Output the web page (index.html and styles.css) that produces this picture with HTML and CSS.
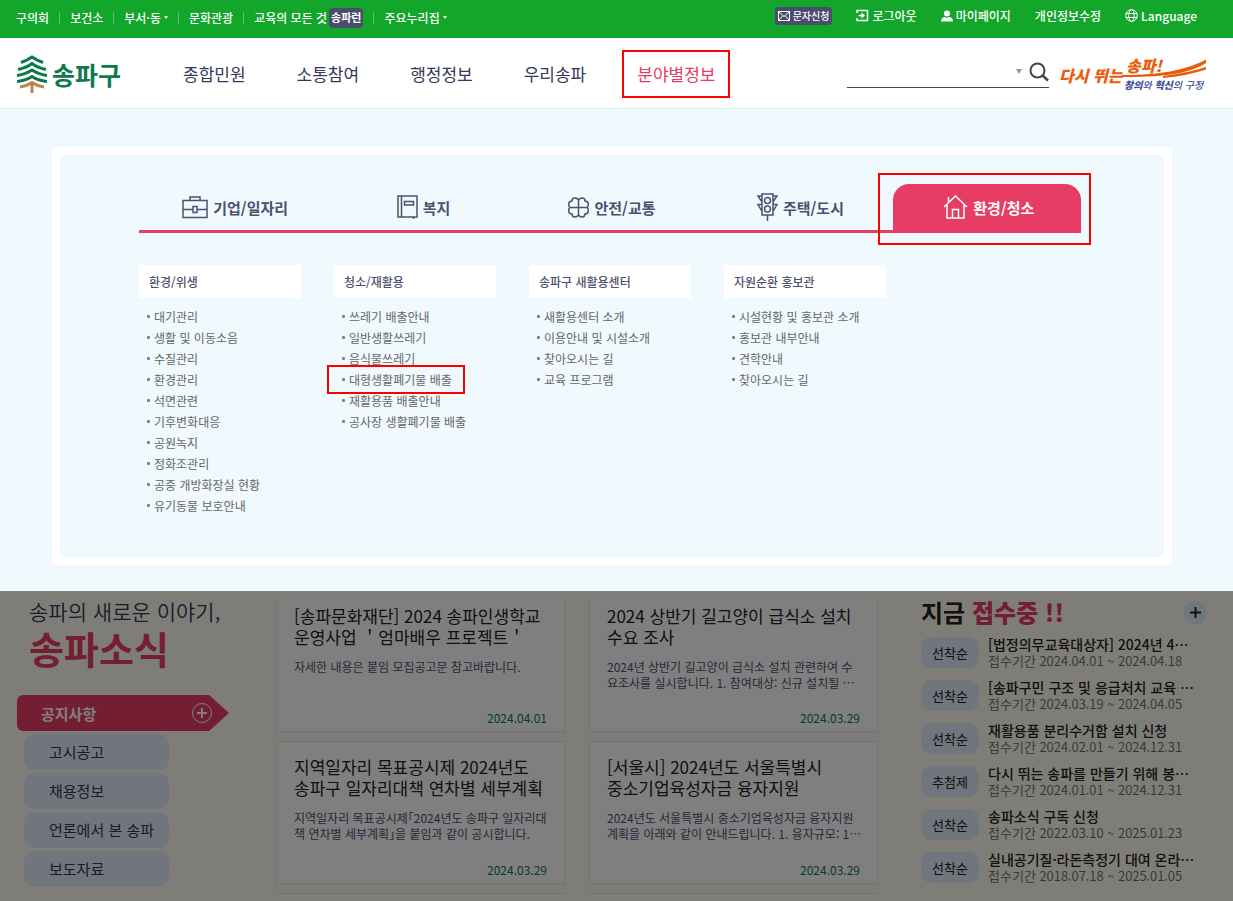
FILE: index.html
```html
<!DOCTYPE html>
<html lang="ko">
<head>
    <meta charset="UTF-8">
    <meta name="viewport" content="width=device-width, initial-scale=1.0">
    <title>송파구</title>
    <link rel="stylesheet" href="styles.css">
</head>
<body>
    <div class="topbar">
        <ul class="top-left">
            <li><a href="#">구의회</a></li>
            <li><a href="#">보건소</a></li>
            <li><a href="#">부서·동<span class="caret"></span></a></li>
            <li><a href="#">문화관광</a></li>
            <li><a href="#">교육의 모든 것 <span class="badge">송파런</span></a></li>
            <li><a href="#">주요누리집<span class="caret"></span></a></li>
        </ul>
        <ul class="top-right">
            <li>
                <a href="#" class="badge sms">
                    <svg width="12" height="10" viewBox="0 0 12 10" fill="none" stroke="#fff"><rect x=".5" y=".5" width="11" height="9"/><path d="M1 1l5 4.500l5-4.500M1 9l3.500-4M11 9L7.500 5"/></svg>
                    문자신청
                </a>
            </li>
            <li>
                <a href="#">
                    <svg width="13" height="13" viewBox="0 0 13 13" fill="none" stroke="#fff" stroke-width="1.500"><path d="M1 4V1.500h10.500v10H1V9"/><path d="M2.500 6.500h4"/><path d="M5.500 3.500L9 6.500l-3.500 3z" fill="#fff" stroke="none"/></svg>
                    로그아웃
                </a>
            </li>
            <li>
                <a href="#">
                    <svg width="12" height="12" viewBox="0 0 12 12" fill="#fff"><circle cx="6" cy="3.500" r="3"/><path d="M0 11.500c0-3 2-4.500 4-4.500l2 1 2-1c2 0 4 1.500 4 4.500z"/></svg>
                    마이페이지
                </a>
            </li>
            <li><a href="#">개인정보수정</a></li>
            <li>
                <a href="#" class="language">
                    <svg width="13" height="13" viewBox="0 0 13 13" fill="none" stroke="#fff"><circle cx="6.500" cy="6.500" r="5.800"/><ellipse cx="6.500" cy="6.500" rx="2.700" ry="5.800"/><path d="M1 4.500h11M1 8.500h11"/></svg>
                    Language
                </a>
            </li>
        </ul>
    </div>

    <header class="header">
        <a href="#" class="logo">
            <svg width="32" height="38" viewBox="0 0 32 38" fill="none" stroke="#0c7a4c" stroke-width="3">
                <path d="M5 7.500Q12 5 16 2Q20 5 27 7.500"/>
                <path d="M2 14.500Q11 12.500 16 8.500Q21 12.500 30 14.500"/>
                <path d="M1 20.500Q10 19 16 15Q22 19 31 20.500"/>
                <path d="M1 26.500Q10 25.500 16 21.500Q22 25.500 31 26.500"/>
                <path d="M4 32Q11 31 16 27.500Q21 31 28 32M16 28V38" stroke="#bc8350"/>
            </svg>
            <span>송파구</span>
        </a>
        <nav class="gnb">
            <a href="#">종합민원</a>
            <a href="#">소통참여</a>
            <a href="#">행정정보</a>
            <a href="#">우리송파</a>
            <a href="#" class="on marked">분야별정보</a>
        </nav>
        <form class="search">
            <input type="text" aria-label="검색어">
            <button type="button" class="search-open" aria-label="인기검색어"><span class="caret"></span></button>
            <button type="submit" aria-label="검색">
                <svg width="20" height="20" viewBox="0 0 20 20" fill="none" stroke="#444" stroke-width="2"><circle cx="8.500" cy="8.500" r="7"/><path d="M13.500 13.500L19 18.500" stroke-width="2.500"/></svg>
            </button>
        </form>
        <svg class="slogan" width="148" height="44" viewBox="0 -4 148 44">
            <path d="M63 20C90 20 122 18 147 4.500V8C128 20 100 22 63 22z" fill="#ea5b0c"/>
            <path d="M104 21Q128 18 147 12V14.500Q128 21 104 23z" fill="#ea5b0c"/>
            <text x="0" y="27" class="slogan-main">다시 뛰는</text>
            <text x="67" y="17" class="slogan-main">송파!</text>
            <text x="65" y="34" class="slogan-sub">창의<tspan class="thin">와</tspan> 혁신<tspan class="thin">의 구정</tspan></text>
        </svg>
    </header>

    <div class="mega">
        <div class="panel">
            <div class="tabs">
                <a href="#">
                    <svg width="26" height="23" viewBox="0 0 26 23" fill="none" stroke="#4d506f" stroke-width="1.500"><path d="M1 4.500h24v17H1zM8 4.500V1h10v3.500M1 13.500h10M15 13.500h10M11 10.500h4v6h-4z"/></svg>
                    기업/일자리
                </a>
                <a href="#">
                    <svg width="21" height="24" viewBox="0 0 21 24" fill="none" stroke="#4d506f" stroke-width="1.500"><path d="M1 1h19v21H1zM4.500 1v21M7.500 6.500h9v3.500h-9zM16.500 22v2"/></svg>
                    복지
                </a>
                <a href="#">
                    <svg width="21" height="21" viewBox="0 0 21 21" fill="none" stroke="#4d506f" stroke-width="1.500"><path d="M10.500 3C9 .5 4 0 4 4C0 4 0 9 2 10.500C0 12 0 17 4 17C4 21 9 20.500 10.500 18C12 20.500 17 21 17 17C21 17 21 12 19 10.500C21 9 21 4 17 4C17 0 12 .5 10.500 3zM10.500 3v15M2 10.500h17"/></svg>
                    안전/교통
                </a>
                <a href="#">
                    <svg width="21" height="28" viewBox="0 0 21 28" fill="none" stroke="#4d506f" stroke-width="1.500"><path d="M5 1h11v21H5zM10.500 22v6M5 3H1l4 6M16 3h4l-4 6M5 11.500H1l4 7M16 11.500h4l-4 7"/><circle cx="10.500" cy="7.500" r="3"/><circle cx="10.500" cy="16" r="3"/></svg>
                    주택/도시
                </a>
                <a href="#" class="on marked">
                    <svg width="25" height="24" viewBox="0 0 25 24" fill="none" stroke="#fff" stroke-width="1.500"><path d="M1 12L12.500 1L24 12M4 10v13h17V10M5.500 7V2M9.500 23v-8.500h6V23"/></svg>
                    환경/청소
                </a>
            </div>
            <div class="columns">
                <section>
                    <h3>환경/위생</h3>
                    <ul>
                        <li><a href="#">대기관리</a></li>
                        <li><a href="#">생활 및 이동소음</a></li>
                        <li><a href="#">수질관리</a></li>
                        <li><a href="#">환경관리</a></li>
                        <li><a href="#">석면관련</a></li>
                        <li><a href="#">기후변화대응</a></li>
                        <li><a href="#">공원녹지</a></li>
                        <li><a href="#">정화조관리</a></li>
                        <li><a href="#">공중 개방화장실 현황</a></li>
                        <li><a href="#">유기동물 보호안내</a></li>
                    </ul>
                </section>
                <section>
                    <h3>청소/재활용</h3>
                    <ul>
                        <li><a href="#">쓰레기 배출안내</a></li>
                        <li><a href="#">일반생활쓰레기</a></li>
                        <li><a href="#">음식물쓰레기</a></li>
                        <li><a href="#" class="marked">대형생활폐기물 배출</a></li>
                        <li><a href="#">재활용품 배출안내</a></li>
                        <li><a href="#">공사장 생활폐기물 배출</a></li>
                    </ul>
                </section>
                <section>
                    <h3>송파구 새활용센터</h3>
                    <ul>
                        <li><a href="#">새활용센터 소개</a></li>
                        <li><a href="#">이용안내 및 시설소개</a></li>
                        <li><a href="#">찾아오시는 길</a></li>
                        <li><a href="#">교육 프로그램</a></li>
                    </ul>
                </section>
                <section>
                    <h3>자원순환 홍보관</h3>
                    <ul>
                        <li><a href="#">시설현황 및 홍보관 소개</a></li>
                        <li><a href="#">홍보관 내부안내</a></li>
                        <li><a href="#">견학안내</a></li>
                        <li><a href="#">찾아오시는 길</a></li>
                    </ul>
                </section>
            </div>
        </div>
    </div>

    <main class="main">
        <div class="news">
            <h2>송파의 새로운 이야기,<strong>송파소식</strong></h2>
            <div class="news-tabs">
                <button class="on">
                    공지사항
                    <svg width="20" height="20" viewBox="0 0 20 20" fill="none" stroke="#fff"><circle cx="10" cy="10" r="9.500"/><path d="M5 10h10M10 5v10" stroke-width="2"/></svg>
                </button>
                <button>고시공고</button>
                <button>채용정보</button>
                <button>언론에서 본 송파</button>
                <button>보도자료</button>
            </div>
        </div>

        <div class="cards">
            <a href="#" class="card">
                <h3>[송파문화재단] 2024 송파인생학교<br>운영사업 ＇엄마배우 프로젝트＇</h3>
                <p>자세한 내용은 붙임 모집공고문 참고바랍니다.</p>
                <time>2024.04.01</time>
            </a>
            <a href="#" class="card">
                <h3>2024 상반기 길고양이 급식소 설치<br>수요 조사</h3>
                <p>2024년 상반기 길고양이 급식소 설치 관련하여 수<br>요조사를 실시합니다. 1. 참여대상: 신규 설치될 ⋯</p>
                <time>2024.03.29</time>
            </a>
            <a href="#" class="card">
                <h3>지역일자리 목표공시제 2024년도<br>송파구 일자리대책 연차별 세부계획</h3>
                <p>지역일자리 목표공시제｢2024년도 송파구 일자리대<br>책 연차별 세부계획｣을 붙임과 같이 공시합니다.</p>
                <time>2024.03.29</time>
            </a>
            <a href="#" class="card">
                <h3>[서울시] 2024년도 서울특별시<br>중소기업육성자금 융자지원</h3>
                <p>2024년도 서울특별시 중소기업육성자금 융자지원<br>계획을 아래와 같이 안내드립니다. 1. 융자규모: 1⋯</p>
                <time>2024.03.29</time>
            </a>
            <div class="card next"></div>
            <div class="card next"></div>
        </div>

        <div class="apply">
            <div class="apply-head">
                <h2>지금 <strong>접수중 !!</strong></h2>
                <button aria-label="더보기">
                    <svg width="11" height="11" viewBox="0 0 11 11" stroke="#222" stroke-width="2"><path d="M0 5.500h11M5.500 0v11"/></svg>
                </button>
            </div>
            <ul>
                <li><span>선착순</span><a href="#"><b>[법정의무교육대상자] 2024년 4⋯</b>접수기간 2024.04.01 ~ 2024.04.18</a></li>
                <li><span>선착순</span><a href="#"><b>[송파구민 구조 및 응급처치 교육 ⋯</b>접수기간 2024.03.19 ~ 2024.04.05</a></li>
                <li><span>선착순</span><a href="#"><b>재활용품 분리수거함 설치 신청</b>접수기간 2024.02.01 ~ 2024.12.31</a></li>
                <li><span>추첨제</span><a href="#"><b>다시 뛰는 송파를 만들기 위해 봉⋯</b>접수기간 2024.01.01 ~ 2024.12.31</a></li>
                <li><span>선착순</span><a href="#"><b>송파소식 구독 신청</b>접수기간 2022.03.10 ~ 2025.01.23</a></li>
                <li><span>선착순</span><a href="#"><b>실내공기질·라돈측정기 대여 온라⋯</b>접수기간 2018.07.18 ~ 2025.01.05</a></li>
            </ul>
        </div>
        <div class="dim"></div>
    </main>
</body>
</html>
```
FILE: styles.css
```css
* {
    box-sizing: border-box;
}
body {
    display: flex;
    flex-direction: column;
    height: 100vh;
    margin: 0;
    overflow: hidden;
    font-family: "Noto Sans CJK KR", sans-serif;
    font-size: 12px;
    color: #222;
}
a {
    color: inherit;
    text-decoration: none;
}
ul {
    list-style: none;
    margin: 0;
    padding: 0;
}
h2, h3, p {
    margin: 0;
}
button {
    border: none;
    background: none;
    padding: 0;
    font-family: inherit;
    color: inherit;
    cursor: pointer;
}
svg {
    flex: none;
}

/* red highlight frames */
.marked {
    position: relative;
}
.marked::after {
    content: "";
    position: absolute;
    border: 2px solid #f00;
}

/* top bar */
.topbar {
    display: flex;
    justify-content: space-between;
    height: 38px;
    padding: 0 36px 0 16px;
    background-color: #12a72b;
    color: #fff;
    font-weight: 500;
    white-space: nowrap;
}
.topbar ul,
.topbar a {
    display: flex;
    align-items: center;
}
.top-left {
    height: 35px;
}
.top-left li + li {
    display: flex;
    align-items: center;
}
.top-left li + li::before {
    content: "";
    width: 1px;
    height: 12px;
    margin: 0 10px;
    background-color: #59c26a;
}
.top-right {
    height: 31px;
    gap: 24px;
}
.top-right a {
    gap: 3px;
}
.caret {
    border: 2px solid transparent;
    border-top: 3px solid #fff;
    border-bottom: 0;
    margin-left: 3px;
}
.badge {
    height: 20px;
    margin-left: 2px;
    padding: 0 2px;
    border-radius: 4px;
    background-color: #4b4d6d;
    font-size: 11px;
    font-weight: 700;
    line-height: 19px;
}
.top-right .sms {
    height: 18px;
    gap: 3px;
    padding: 0 3px;
    font-size: 10px;
    font-weight: 500;
}

/* header */
.header {
    display: flex;
    align-items: center;
    height: 71px;
    padding: 0 26px 0 16px;
    border-bottom: 1px solid #e4eff5;
    background-color: #fff;
}
.logo {
    display: flex;
    align-items: center;
    gap: 4px;
    width: 167px;
    padding-top: 2px;
    color: #0c7a4c;
    font-size: 25px;
    font-weight: 700;
    line-height: 36px;
}
.gnb {
    display: flex;
    gap: 51px;
    padding-top: 2px;
    color: #34375a;
    font-size: 17px;
    line-height: 28px;
    white-space: nowrap;
}
.gnb .on {
    color: #e73c64;
}
.gnb .marked::after {
    inset: -10px -15px;
}
.search {
    display: flex;
    align-items: center;
    width: 202px;
    height: 32px;
    margin: 0 10px 2px auto;
    border-bottom: 1px solid #444;
}
.search input {
    flex: 1;
    min-width: 0;
    border: none;
    background: none;
    outline: none;
}
.search .caret {
    display: block;
    margin: 0 7px 0 0;
    border-width: 3px;
    border-top: 5px solid #7c9cb8;
    border-bottom: 0;
}
.search svg {
    display: block;
}
.slogan-main {
    fill: #ea5b0c;
    font-size: 16px;
    font-weight: 900;
    font-style: italic;
}
.slogan-sub {
    fill: #3c4c9a;
    font-size: 10px;
    font-weight: 900;
    font-style: italic;
}
.slogan-sub .thin {
    font-weight: 500;
}

/* mega menu */
.mega {
    padding: 38px 61px 26px 52px;
    background-color: #f0f9fd;
}
.panel {
    padding: 29px 83px 41px 79px;
    border: 8px solid #fff;
}
.tabs {
    display: flex;
    border-bottom: 3px solid #e73c64;
}
.tabs a {
    display: flex;
    flex: 1;
    align-items: center;
    justify-content: center;
    gap: 5px;
    height: 46px;
    padding-left: 4px;
    color: #4d506f;
    font-size: 15px;
    font-weight: 700;
}
.tabs .on {
    border-radius: 16px 16px 0 0;
    background-color: #e73c64;
    color: #fff;
}
.tabs .marked::after {
    inset: -11px -10px -15px -15px;
}
.columns {
    display: grid;
    grid-template-columns: repeat(5, 1fr);
    gap: 33px;
    padding-top: 32px;
    white-space: nowrap;
}
.columns h3 {
    padding-left: 10px;
    background-color: #fff;
    color: #4d506f;
    font-size: 12px;
    font-weight: 500;
    line-height: 33px;
}
.columns ul {
    padding: 8px 0 0 8px;
    color: #666;
    line-height: 21px;
}
.columns li {
    display: flex;
    align-items: center;
    gap: 4px;
}
.columns li::before {
    content: "";
    width: 3px;
    height: 3px;
    border-radius: 1px;
    background-color: #7a7d98;
}
.columns .marked::after {
    inset: -4px -13px -4px -22px;
}

/* page under the menu */
.main {
    position: relative;
    flex: 1;
    display: grid;
    grid-template-columns: 260px 1fr 329px;
    align-items: start;
    min-height: 0;
    padding: 0 26px 0 16px;
    background-color: #fffbf0;
}
.dim {
    position: absolute;
    inset: 0;
    background-color: rgba(0, 0, 0, 0.5);
}
.news h2 {
    padding: 5px 0 0 13px;
    color: #34375a;
    font-size: 21px;
    font-weight: 350;
    line-height: 30px;
}
.news h2 strong {
    display: block;
    color: #e73c64;
    font-size: 38px;
    font-weight: 700;
    line-height: 44px;
}
.news-tabs {
    display: flex;
    flex-direction: column;
    align-items: flex-start;
    gap: 3px;
    padding-top: 25px;
}
.news-tabs button {
    width: 145px;
    height: 36px;
    margin-left: 8px;
    padding: 0 0 2px 25px;
    border-radius: 10px;
    background-color: #e2eafa;
    color: #34375a;
    font-size: 15px;
    text-align: left;
}
.news-tabs .on {
    display: flex;
    align-items: center;
    justify-content: space-between;
    width: 212px;
    margin-left: 1px;
    padding: 0 17px 0 24px;
    border-radius: 6px;
    background-color: #e73c64;
    clip-path: polygon(0 0, 192px 0, 100% 50%, 192px 100%, 0 100%);
    color: #fff;
    font-weight: 700;
}
.cards {
    display: grid;
    grid-template-columns: repeat(2, minmax(0, 1fr));
    grid-template-rows: 134px 143px 3px;
    gap: 9px 24px;
    margin-top: 7px;
    overflow: hidden;
}
.card {
    display: flex;
    flex-direction: column;
    padding: 14px 17px 4px;
    border: 1px solid #e4e4ea;
    background-color: #fff;
    white-space: nowrap;
}
.card:nth-child(-n+2) {
    padding-top: 7px;
    border-top: none;
}
.card.next {
    padding: 0;
    border-bottom: none;
}
.card h3 {
    font-size: 17px;
    font-weight: 400;
    line-height: 21px;
}
.card p {
    padding-top: 12px;
    color: #4d506f;
    font-size: 12px;
    line-height: 16px;
}
.card time {
    margin-top: auto;
    color: #0c7a4c;
    font-size: 12px;
    line-height: 18px;
    text-align: right;
}
.apply {
    padding: 3px 0 0 43px;
}
.apply-head {
    display: flex;
    align-items: center;
    justify-content: space-between;
}
.apply h2 {
    font-size: 24px;
    font-weight: 700;
    line-height: 36px;
}
.apply h2 strong {
    color: #e73c64;
}
.apply button {
    display: flex;
    align-items: center;
    justify-content: center;
    width: 23px;
    height: 23px;
    border-radius: 50%;
    background-color: #e2eafa;
}
.apply ul {
    display: flex;
    flex-direction: column;
    gap: 9px;
    padding-top: 5px;
}
.apply li {
    display: flex;
    align-items: center;
    gap: 9px;
    height: 34px;
}
.apply li span {
    width: 58px;
    border-radius: 10px;
    background-color: #e2eafa;
    font-size: 13px;
    line-height: 31px;
    text-align: center;
}
.apply li a {
    color: #666;
    font-size: 13px;
    font-weight: 350;
    line-height: 16px;
    white-space: nowrap;
}
.apply li b {
    display: block;
    color: #222;
    font-size: 14px;
    font-weight: 500;
    line-height: 17px;
}
```
